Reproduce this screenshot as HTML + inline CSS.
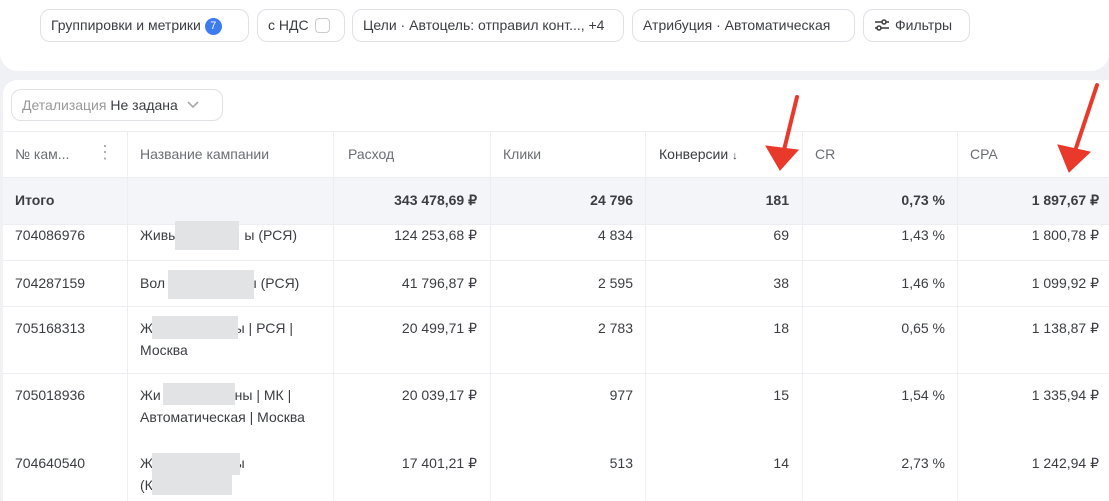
<!DOCTYPE html>
<html><head><meta charset="utf-8"><style>
*{margin:0;padding:0;box-sizing:border-box}
body{width:1109px;height:501px;overflow:hidden;background:#eff1f4;font-family:"Liberation Sans","Noto Sans CJK SC",sans-serif;font-size:14px;color:#3b3d42;position:relative}
.top{position:absolute;left:0;top:0;width:1109px;height:71px;background:#fff;border-radius:0 0 18px 18px}
.chip{position:absolute;top:9px;height:33px;border:1px solid #dfe1e5;border-radius:10px;background:#fff;line-height:31px;padding:0 10px;font-size:14px;color:#3b3d42;white-space:nowrap}
.main{position:absolute;left:3px;top:80px;width:1106px;height:421px;background:#fff;border-radius:14px 0 0 0}
.a{position:absolute;white-space:nowrap}
.r{text-align:right}
.vl{position:absolute;top:131px;width:1px;height:370px;background:#eceef1}
.hl{position:absolute;left:3px;width:1106px;height:1px;background:#eceef1}
.blur{position:absolute;background:#e2e3e5}
</style></head><body>
<div class="top"></div>
<div class="chip" style="left:40px;width:209px">Группировки и метрики <span style="display:inline-block;width:17px;height:17px;border-radius:50%;background:#3d7bf0;color:#fff;font-size:11px;line-height:17px;text-align:center;vertical-align:1px">7</span></div>
<div class="chip" style="left:257px;width:88px">с НДС <span style="display:inline-block;width:15px;height:15px;border:1px solid #ccc;border-radius:4px;vertical-align:-3px;margin-left:3px"></span></div>
<div class="chip" style="left:352px;width:272px">Цели · Автоцель: отправил конт..., +4</div>
<div class="chip" style="left:632px;width:223px">Атрибуция · Автоматическая</div>
<div class="chip" style="left:863px;width:107px"><svg width="16" height="14" viewBox="0 0 16 14" style="vertical-align:-2px;margin-right:5px"><g stroke="#444" stroke-width="1.6" fill="none"><line x1="1" y1="4" x2="15" y2="4"/><line x1="1" y1="10" x2="15" y2="10"/><circle cx="10" cy="4" r="2" fill="#fff"/><circle cx="5" cy="10" r="2" fill="#fff"/></g></svg>Фильтры</div>

<div class="main"></div>
<div class="a" style="left:11px;top:89px;width:212px;height:32px;border:1px solid #dfe1e5;border-radius:10px;line-height:30px;padding-left:10px;font-size:14px"><span style="color:#999">Детализация</span> Не задана <svg width="14" height="10" viewBox="0 0 14 10" style="margin-left:4px"><path d="M2 2l5 5 5-5" stroke="#aaa" stroke-width="1.6" fill="none"/></svg></div>

<div style="position:absolute;left:3px;top:177px;width:1106px;height:47px;background:#f4f5f8"></div>
<div class="hl" style="top:131px"></div><div class="hl" style="top:177px"></div><div class="hl" style="top:224px"></div>
<div class="hl" style="top:260px"></div><div class="hl" style="top:306px"></div><div class="hl" style="top:373px"></div>
<div class="vl" style="left:127px"></div><div class="vl" style="left:333px"></div><div class="vl" style="left:490px"></div>
<div class="vl" style="left:645px"></div><div class="vl" style="left:802px"></div><div class="vl" style="left:957px"></div>

<div class="a" style="left:15px;top:146px;color:#6b6e75">№ кам...</div>
<div class="a" style="left:96px;top:143px;color:#aaa;font-size:18px;line-height:18px">⋮</div>
<div class="a" style="left:140px;top:146px;color:#6b6e75">Название кампании</div>
<div class="a" style="left:348px;top:146px;color:#6b6e75">Расход</div>
<div class="a" style="left:503px;top:146px;color:#6b6e75">Клики</div>
<div class="a" style="left:659px;top:146px;color:#3b3d42">Конверсии <span style="font-size:11px">↓</span></div>
<div class="a" style="left:815px;top:146px;color:#6b6e75">CR</div>
<div class="a" style="left:970px;top:146px;color:#6b6e75">CPA</div>

<div class="a" style="left:15px;top:192px;font-weight:bold">Итого</div>
<div class="a r" style="right:632px;top:192px;font-weight:bold">343 478,69 ₽</div>
<div class="a r" style="right:476px;top:192px;font-weight:bold">24 796</div>
<div class="a r" style="right:320px;top:192px;font-weight:bold">181</div>
<div class="a r" style="right:164px;top:192px;font-weight:bold">0,73 %</div>
<div class="a r" style="right:10px;top:192px;font-weight:bold">1 897,67 ₽</div>

<div class="a" style="left:15px;top:227px">704086976</div>
<div class="a" style="left:140px;top:227px">Живы&nbsp;&nbsp;&nbsp;&nbsp;&nbsp;&nbsp;&nbsp;&nbsp;&nbsp;&nbsp;&nbsp;&nbsp;&nbsp;&nbsp;&nbsp;&nbsp;&nbsp;ы (РСЯ)</div>
<div class="blur" style="left:175px;top:221px;width:64px;height:29px"></div>
<div class="a r" style="right:632px;top:227px">124 253,68 ₽</div><div class="a r" style="right:476px;top:227px">4 834</div><div class="a r" style="right:320px;top:227px">69</div><div class="a r" style="right:164px;top:227px">1,43 %</div><div class="a r" style="right:10px;top:227px">1 800,78 ₽</div>

<div class="a" style="left:15px;top:275px">704287159</div>
<div class="a" style="left:140px;top:275px">Вол&nbsp;&nbsp;&nbsp;&nbsp;&nbsp;&nbsp;&nbsp;&nbsp;&nbsp;&nbsp;&nbsp;&nbsp;&nbsp;&nbsp;&nbsp;&nbsp;&nbsp;&nbsp;&nbsp;&nbsp;&nbsp;ы (РСЯ)</div>
<div class="blur" style="left:168px;top:270px;width:86px;height:29px"></div>
<div class="a r" style="right:632px;top:275px">41 796,87 ₽</div><div class="a r" style="right:476px;top:275px">2 595</div><div class="a r" style="right:320px;top:275px">38</div><div class="a r" style="right:164px;top:275px">1,46 %</div><div class="a r" style="right:10px;top:275px">1 099,92 ₽</div>

<div class="a" style="left:15px;top:320px">705168313</div>
<div class="a" style="left:140px;top:317px;line-height:22px">Ж&nbsp;&nbsp;&nbsp;&nbsp;&nbsp;&nbsp;&nbsp;&nbsp;&nbsp;&nbsp;&nbsp;&nbsp;&nbsp;&nbsp;&nbsp;&nbsp;&nbsp;&nbsp;&nbsp;&nbsp;&nbsp;ы | РСЯ |<br>Москва</div>
<div class="blur" style="left:152px;top:316px;width:86px;height:23px"></div>
<div class="a r" style="right:632px;top:320px">20 499,71 ₽</div><div class="a r" style="right:476px;top:320px">2 783</div><div class="a r" style="right:320px;top:320px">18</div><div class="a r" style="right:164px;top:320px">0,65 %</div><div class="a r" style="right:10px;top:320px">1 138,87 ₽</div>

<div class="a" style="left:15px;top:387px">705018936</div>
<div class="a" style="left:140px;top:384px;line-height:22px">Жи&nbsp;&nbsp;&nbsp;&nbsp;&nbsp;&nbsp;&nbsp;&nbsp;&nbsp;&nbsp;&nbsp;&nbsp;&nbsp;&nbsp;&nbsp;&nbsp;&nbsp;&nbsp;&nbsp;ны | МК |<br>Автоматическая | Москва</div>
<div class="blur" style="left:163px;top:383px;width:72px;height:22px"></div>
<div class="a r" style="right:632px;top:387px">20 039,17 ₽</div><div class="a r" style="right:476px;top:387px">977</div><div class="a r" style="right:320px;top:387px">15</div><div class="a r" style="right:164px;top:387px">1,54 %</div><div class="a r" style="right:10px;top:387px">1 335,94 ₽</div>

<div class="a" style="left:15px;top:455px">704640540</div>
<div class="a" style="left:140px;top:452px;line-height:22px">Ж&nbsp;&nbsp;&nbsp;&nbsp;&nbsp;&nbsp;&nbsp;&nbsp;&nbsp;&nbsp;&nbsp;&nbsp;&nbsp;&nbsp;&nbsp;&nbsp;&nbsp;&nbsp;&nbsp;&nbsp;&nbsp;ы<br>(К</div>
<div class="blur" style="left:152px;top:453px;width:88px;height:22px"></div>
<div class="blur" style="left:152px;top:475px;width:80px;height:20px"></div>
<div class="a r" style="right:632px;top:455px">17 401,21 ₽</div><div class="a r" style="right:476px;top:455px">513</div><div class="a r" style="right:320px;top:455px">14</div><div class="a r" style="right:164px;top:455px">2,73 %</div><div class="a r" style="right:10px;top:455px">1 242,94 ₽</div>

<svg style="position:absolute;left:0;top:0" width="1109" height="501">
<g stroke="#e8392b" stroke-width="4" stroke-linecap="round" fill="#e8392b">
<line x1="797" y1="97" x2="784" y2="150"/>
<polygon points="766,146 780,170 798,150" stroke-width="1"/>
<line x1="1097" y1="85" x2="1076" y2="148"/>
<polygon points="1058,145 1069,172 1090,152" stroke-width="1"/>
</g></svg>
</body></html>
